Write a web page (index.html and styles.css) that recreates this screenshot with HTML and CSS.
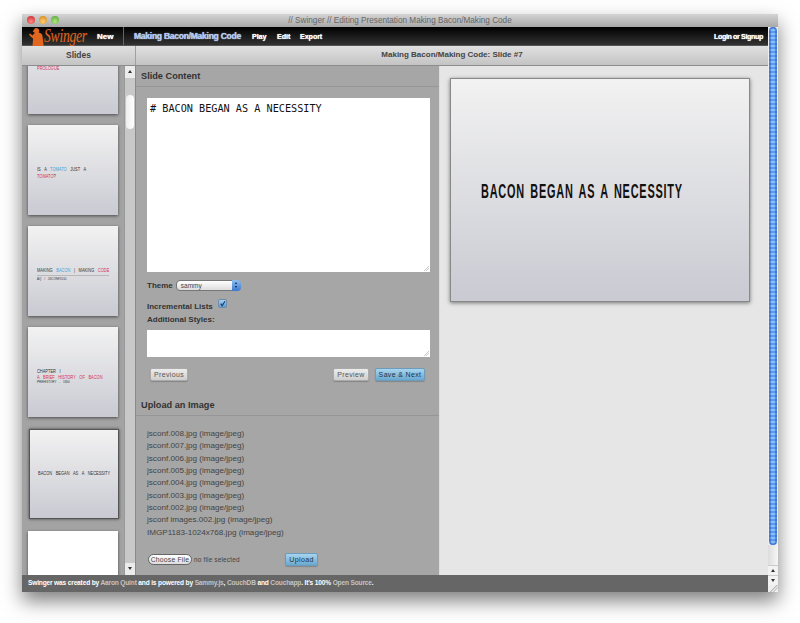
FILE: index.html
```html
<!DOCTYPE html>
<html lang="en">
<head>
  <meta charset="UTF-8" />
  <title>// Swinger // Editing Presentation Making Bacon/Making Code</title>
  <link rel="stylesheet" href="styles.css">
</head>
<body>
  <div id="window">
    <div id="titlebar">
      <div class="lights">
        <span class="light red"></span>
        <span class="light yellow"></span>
        <span class="light green"></span>
      </div>
      <div class="title">// Swinger // Editing Presentation Making Bacon/Making Code</div>
    </div>

    <div id="frame">
      <div id="main">
        <div id="nav">
          <div class="brand">
            <svg class="figure" width="15" height="18" viewBox="0 0 15 18">
              <path fill="#e2661f" d="M7 0c2 0 3.200 1.200 3.200 2.800 0 .6-.2 1.200-.5 1.700C12 5 13.200 6 13.500 8l1.200 10H3.500l.6-7.500L2 9 0 6.500l1-.9 2.500 2C4.200 6.300 5 5.400 6 5 4.800 4.500 4 3.800 3.600 3 5 3 4.600.5 7 0z"/>
            </svg>
            <span class="logo">Swinger</span>
          </div>
          <a class="new">New</a>
          <div class="sep"></div>
          <a class="deck">Making Bacon/Making Code</a>
          <a class="item play">Play</a>
          <a class="item edit">Edit</a>
          <a class="item">Export</a>
          <a class="login">Login or Signup</a>
        </div>

        <div id="subheader">
          <div class="sub-left">Slides</div>
          <div class="sub-right">Making Bacon/Making Code: Slide #7</div>
        </div>

        <div id="panels">
          <div id="slides">
            <div class="thumbs">
              <div class="thumb"><p class="pink">PROLOGUE</p></div>
              <div class="thumb">
                <p>IS A <span class="blue">TOMATO</span> JUST A<br><span class="pink">TOMATO</span>?</p>
              </div>
              <div class="thumb">
                <p class="ruled">MAKING <span class="blue">BACON</span> | MAKING <span class="pink">CODE</span></p>
                <p class="tiny">AQ / JSCONF2010</p>
              </div>
              <div class="thumb">
                <p>CHAPTER I</p>
                <p class="pink tight">A BRIEF HISTORY OF BACON</p>
                <p class="tiny">PREHISTORY - 1800</p>
              </div>
              <div class="thumb current"><p>BACON BEGAN AS A NECESSITY</p></div>
              <div class="thumb blank"></div>
            </div>
            <div class="sidebar-scroll">
              <div class="arrow up"></div>
              <div class="knob"></div>
              <div class="arrow down"></div>
            </div>
          </div>

          <div id="editor">
            <h2 class="section-head">Slide Content</h2>
            <div class="form">
              <textarea class="content-box" spellcheck="false"># BACON BEGAN AS A NECESSITY</textarea>
              <div class="theme-row">
                <label>Theme</label>
                <div class="select"><span>sammy</span><i class="select-btn"></i></div>
              </div>
              <div class="check-row">
                <label>Incremental Lists</label>
                <span class="check">
                  <svg width="10" height="10" viewBox="0 0 10 10"><path d="M2.500 4.500 4.500 7.500 8.500 1" fill="none" stroke="#123a66" stroke-width="1.600"/></svg>
                </span>
              </div>
              <label class="styles-label">Additional Styles:</label>
              <textarea class="styles-box"></textarea>
              <div class="buttons">
                <button class="btn prev">Previous</button>
                <button class="btn preview">Preview</button>
                <button class="btn primary save">Save &amp; Next</button>
              </div>
            </div>

            <h2 class="section-head upload-head">Upload an Image</h2>
            <ul class="files">
              <li>jsconf.008.jpg (image/jpeg)</li>
              <li>jsconf.007.jpg (image/jpeg)</li>
              <li>jsconf.006.jpg (image/jpeg)</li>
              <li>jsconf.005.jpg (image/jpeg)</li>
              <li>jsconf.004.jpg (image/jpeg)</li>
              <li>jsconf.003.jpg (image/jpeg)</li>
              <li>jsconf.002.jpg (image/jpeg)</li>
              <li>jsconf images.002.jpg (image/jpeg)</li>
              <li>IMGP1183-1024x768.jpg (image/jpeg)</li>
            </ul>
            <div class="upload-row">
              <button class="choose">Choose File</button>
              <span class="nofile">no file selected</span>
              <button class="btn primary upload">Upload</button>
            </div>
          </div>

          <div id="stage">
            <div class="slide"><h1>BACON BEGAN AS A NECESSITY</h1></div>
          </div>
        </div>

        <div id="footer">
          <b>Swinger was created by <a>Aaron Quint</a> and is powered by <a>Sammy.js</a>, <a>CouchDB</a> and <a>Couchapp</a>. It's 100% <a>Open Source</a>.</b>
        </div>
      </div>

      <div id="scrollbar">
        <div class="bar"></div>
        <div class="bar-rest"></div>
        <div class="step up"></div>
        <div class="step down"></div>
        <div class="grip"></div>
      </div>
    </div>
  </div>
</body>
</html>
```

FILE: styles.css
```css
* {
  box-sizing: border-box;
}

html,
body {
  height: 623px;
}

body {
  margin: 0;
  padding: 14px 22px 0;
  background: #fff;
  font-family: "Liberation Sans", Arial, sans-serif;
}

#window {
  width: 756px;
  height: 578px;
  display: flex;
  flex-direction: column;
  box-shadow: 0 9px 18px rgba(0, 0, 0, 0.5);
}

/* mac title bar */
#titlebar {
  height: 13px;
  position: relative;
  background: linear-gradient(#d4d4d4, #a8a8a8);
  font-size: 8.200px;
  color: #666;
  text-align: center;
  line-height: 14px;
}

.lights {
  position: absolute;
  left: 5px;
  top: 2px;
  display: flex;
  gap: 4px;
}

.light {
  width: 8px;
  height: 8px;
  border-radius: 50%;
}

.red { background: radial-gradient(circle at 50% 70%, #ff8a80, #c8202a); }
.yellow { background: radial-gradient(circle at 50% 70%, #ffd070, #d08010); }
.green { background: radial-gradient(circle at 50% 70%, #b0e880, #50a030); }

#frame {
  flex: 1;
  display: flex;
  min-height: 0;
}

#main {
  flex: 1;
  min-width: 0;
  display: flex;
  flex-direction: column;
}

/* black nav */
#nav {
  height: 19px;
  display: flex;
  align-items: center;
  background: linear-gradient(#000, #333);
  border-bottom: 1px solid #555;
  color: #fff;
  font-size: 8px;
  font-weight: bold;
  white-space: nowrap;
  text-shadow: 0 0 1px #fff;
}

.brand {
  width: 75px;
  padding-left: 7px;
  display: flex;
  align-items: center;
}

.figure {
  flex: none;
  margin-top: 1px;
}

.logo {
  display: inline-block;
  font-family: "Liberation Serif", serif;
  font-style: italic;
  font-weight: normal;
  font-size: 19px;
  line-height: 18px;
  color: #e2661f;
  text-shadow: none;
  letter-spacing: -0.4px;
  transform: scaleX(0.72);
  transform-origin: left center;
}

.new {
  width: 26px;
}

.sep {
  width: 1px;
  height: 18px;
  background: #666;
  margin-right: 10px;
}

.deck {
  color: #a8c8f8;
  font-size: 8.600px;
  letter-spacing: -0.3px;
  width: 118px;
}

.item {
  margin-right: 12px;
  font-size: 7.200px;
  letter-spacing: -0.1px;
}

.play { width: 13px; }
.edit { width: 11px; }

.login {
  margin-left: auto;
  margin-right: 5px;
  font-size: 7.200px;
  letter-spacing: -0.4px;
}

/* sub header */
#subheader {
  height: 20px;
  display: flex;
  background: linear-gradient(#e0e0e0, #c4c4c4);
  border-bottom: 1px solid #8c8c8c;
  font-size: 8.500px;
  font-weight: bold;
  color: #444;
  line-height: 18px;
  text-align: center;
}

.sub-left {
  width: 114px;
  border-right: 1px solid #a0a0a0;
}

.sub-right {
  flex: 1;
  font-size: 8px;
}

#panels {
  flex: 1;
  min-height: 0;
  display: flex;
}

/* slides column */
#slides {
  width: 114px;
  display: flex;
  overflow: hidden;
  background: #a3a3a3;
  border-right: 1px solid #8a8a8a;
}

.thumbs {
  width: 102px;
  padding-left: 6px;
  margin-top: -42px;
}

.thumb {
  width: 90px;
  height: 90px;
  margin-bottom: 11px;
  padding: 41px 0 0 9px;
  background: linear-gradient(#f2f2f2, #c9cad2);
  box-shadow: 0 1px 3px rgba(0, 0, 0, 0.55);
  font-size: 5.500px;
  line-height: 7px;
  word-spacing: 3.500px;
  white-space: nowrap;
  color: #333;
}

/* the slide font is a tall condensed one */
.thumb p {
  margin: 0;
  transform: scaleX(0.72);
  transform-origin: left center;
}

.thumb .pink { color: #d8305a; }
.thumb .blue { color: #4aa0d8; }

.thumb .ruled {
  width: 100px;
  border-bottom: 1px solid #b8b8b8;
  padding-bottom: 1px;
  margin-bottom: 1px;
}

.thumb .tiny {
  font-size: 3px;
  line-height: 4px;
  word-spacing: 2px;
  transform: none;
  color: #333;
}

.thumb .tight {
  line-height: 5px;
}

.thumb.current {
  border: 1px solid #555;
  margin: 12px 0 12px 1px;
  padding: 40px 0 0 8px;
  box-shadow: 0 0 3px rgba(0, 0, 0, 0.6);
}

.thumb.blank {
  background: #fff;
  height: 60px;
}

.sidebar-scroll {
  width: 11px;
  display: flex;
  flex-direction: column;
  background: #c8c8c8;
  border-left: 1px solid #999;
}

.arrow {
  height: 12px;
  background: #ececec;
  position: relative;
}

.arrow::after {
  content: "";
  position: absolute;
  left: 3px;
  top: 4px;
  border: 2px solid transparent;
  border-width: 0 2px 3px;
  border-bottom-color: #333;
}

.arrow.down {
  margin-top: auto;
}

.arrow.down::after {
  border-width: 3px 2px 0;
  border-color: #333 transparent transparent;
}

.knob {
  width: 8px;
  height: 34px;
  margin: 17px 0 0 1px;
  border-radius: 4px;
  background: linear-gradient(90deg, #eee, #fff);
}

/* editor column */
#editor {
  width: 303px;
  background: #a6a6a6;
  color: #333;
  overflow: hidden;
}

.section-head {
  height: 21px;
  margin: 0;
  padding-left: 5px;
  border-bottom: 1px solid #969696;
  font-size: 9.200px;
  line-height: 20px;
  color: #333;
}

.form {
  padding: 11px 8px 0 11px;
}

.form textarea {
  display: block;
  width: 283px;
  border: none;
  margin: 0;
  background: #fff linear-gradient(135deg, transparent 60%, #aaa 60%, #fff 72%, #aaa 72%, #fff 86%) no-repeat right 1px bottom 1px / 7px 7px;
  outline: none;
  resize: none;
}

.content-box {
  height: 174px;
  padding: 4px 3px;
  font-family: "DejaVu Sans Mono", monospace;
  font-size: 10.200px;
  line-height: 14px;
  color: #111;
}

.form label {
  font-size: 8px;
  font-weight: bold;
  color: #333;
}

.theme-row {
  display: flex;
  align-items: center;
  height: 12px;
  margin-top: 7px;
  gap: 3px;
}

.select {
  width: 65px;
  height: 11px;
  position: relative;
  border-radius: 4px;
  background: linear-gradient(#fff, #ddd);
  border: 1px solid #777;
  font-size: 6.500px;
  line-height: 9px;
  padding-left: 4px;
  color: #444;
}

.select-btn {
  position: absolute;
  right: -1px;
  top: -1px;
  width: 9px;
  height: 11px;
  border-radius: 0 4px 4px 0;
  background: linear-gradient(#8fbdf0, #3a78d0);
}

.select-btn::before,
.select-btn::after {
  content: "";
  position: absolute;
  left: 3px;
  border: 0 solid transparent;
  border-width: 0 1.500px 2px;
  border-bottom-color: #123;
}

.select-btn::before {
  top: 2px;
}

.select-btn::after {
  top: 6px;
  border-width: 2px 1.500px 0;
  border-color: #123 transparent transparent;
}

.check-row {
  display: flex;
  align-items: flex-end;
  height: 16px;
  margin-top: 4px;
  gap: 5px;
}

.check {
  width: 9px;
  height: 9px;
  margin-bottom: 3px;
  border-radius: 2px;
  background: linear-gradient(#a8d0f0, #5c9cd8);
  border: 1px solid #6c8cac;
  display: flex;
  align-items: center;
  justify-content: center;
}

.styles-label {
  display: block;
  line-height: 10px;
  margin-top: 4px;
}

.form .styles-box {
  height: 27px;
  margin-top: 5px;
  padding: 3px;
}

.buttons {
  display: flex;
  margin-top: 11px;
  padding-left: 3px;
}

.btn {
  height: 13px;
  padding: 0;
  border: 1px solid #aaa;
  border-radius: 2px;
  background: linear-gradient(#ececec, #cfcfcf);
  font-family: "Liberation Sans", sans-serif;
  font-size: 7px;
  letter-spacing: 0.35px;
  color: #555;
  box-shadow: 0 1px 1px rgba(0, 0, 0, 0.2);
}

.btn.primary {
  background: linear-gradient(#a8d4ee, #6aa8d0);
  border-color: #6c9cbc;
  color: #234;
}

.prev { width: 38px; }
.preview { width: 36px; margin-left: auto; }
.save { width: 50px; margin: 0 6px; }

.upload-head {
  margin-top: 14px;
}

.files {
  list-style: none;
  margin: 0;
  padding: 12px 0 0 11px;
  font-size: 8.100px;
  line-height: 12.350px;
  color: #444;
}

.upload-row {
  display: flex;
  align-items: center;
  height: 14px;
  margin-top: 13px;
  padding-left: 12px;
}

.choose {
  width: 44px;
  height: 11px;
  padding: 0;
  border: 1px solid #666;
  border-radius: 6px;
  background: linear-gradient(#fff, #ddd);
  font-family: "Liberation Sans", sans-serif;
  font-size: 6.800px;
  letter-spacing: 0.2px;
  color: #444;
}

.nofile {
  width: 93px;
  padding-left: 2px;
  font-size: 6.500px;
  letter-spacing: 0.15px;
  color: #444;
}

.upload {
  width: 33px;
}

/* preview column */
#stage {
  flex: 1;
  padding: 12px 0 0 10px;
  background: #e6e6e6;
  border-left: 1px solid #ddd;
}

.slide {
  width: 300px;
  height: 224px;
  background: linear-gradient(#f2f2f2, #c9cad2);
  border: 1px solid #888;
  box-shadow: 0 1px 4px rgba(0, 0, 0, 0.5);
  padding: 102px 0 0 30px;
}

.slide h1 {
  margin: 0;
  font-size: 21px;
  font-weight: bold;
  line-height: 20px;
  letter-spacing: 1.500px;
  word-spacing: 3px;
  color: #111;
  white-space: nowrap;
  transform: scaleX(0.52);
  transform-origin: left center;
}

/* footer */
#footer {
  height: 17px;
  padding-left: 6px;
  background: #666;
  color: #fff;
  font-size: 6.600px;
  letter-spacing: -0.17px;
  line-height: 16px;
}

#footer a {
  color: #c4c4c4;
}

/* window scroll bar */
#scrollbar {
  width: 10px;
  display: flex;
  flex-direction: column;
  background: #eee;
}

.bar {
  height: 518px;
  border-radius: 4px;
  margin: 0 1px;
  background: repeating-linear-gradient(#5b9cf0 0 2px, #8cc0fa 2px 4px);
  box-shadow: inset 2px 0 1px rgba(30, 80, 180, 0.5), inset -2px 0 1px rgba(30, 80, 180, 0.5);
}

.bar-rest {
  height: 20px;
  background: linear-gradient(90deg, #ddd, #f6f6f6);
}

.step {
  height: 10px;
  background: #f2f2f2;
  border-top: 1px solid #ccc;
  position: relative;
}

.step::after {
  content: "";
  position: absolute;
  left: 3px;
  top: 3px;
  border: 2px solid transparent;
  border-width: 0 2px 3px;
  border-bottom-color: #333;
}

.step.down::after {
  border-width: 3px 2px 0;
  border-color: #333 transparent transparent;
}

.grip {
  flex: 1;
  background: linear-gradient(135deg, #eee 50%, #aaa 50%, #eee 65%, #aaa 65%, #eee 80%);
}
```
